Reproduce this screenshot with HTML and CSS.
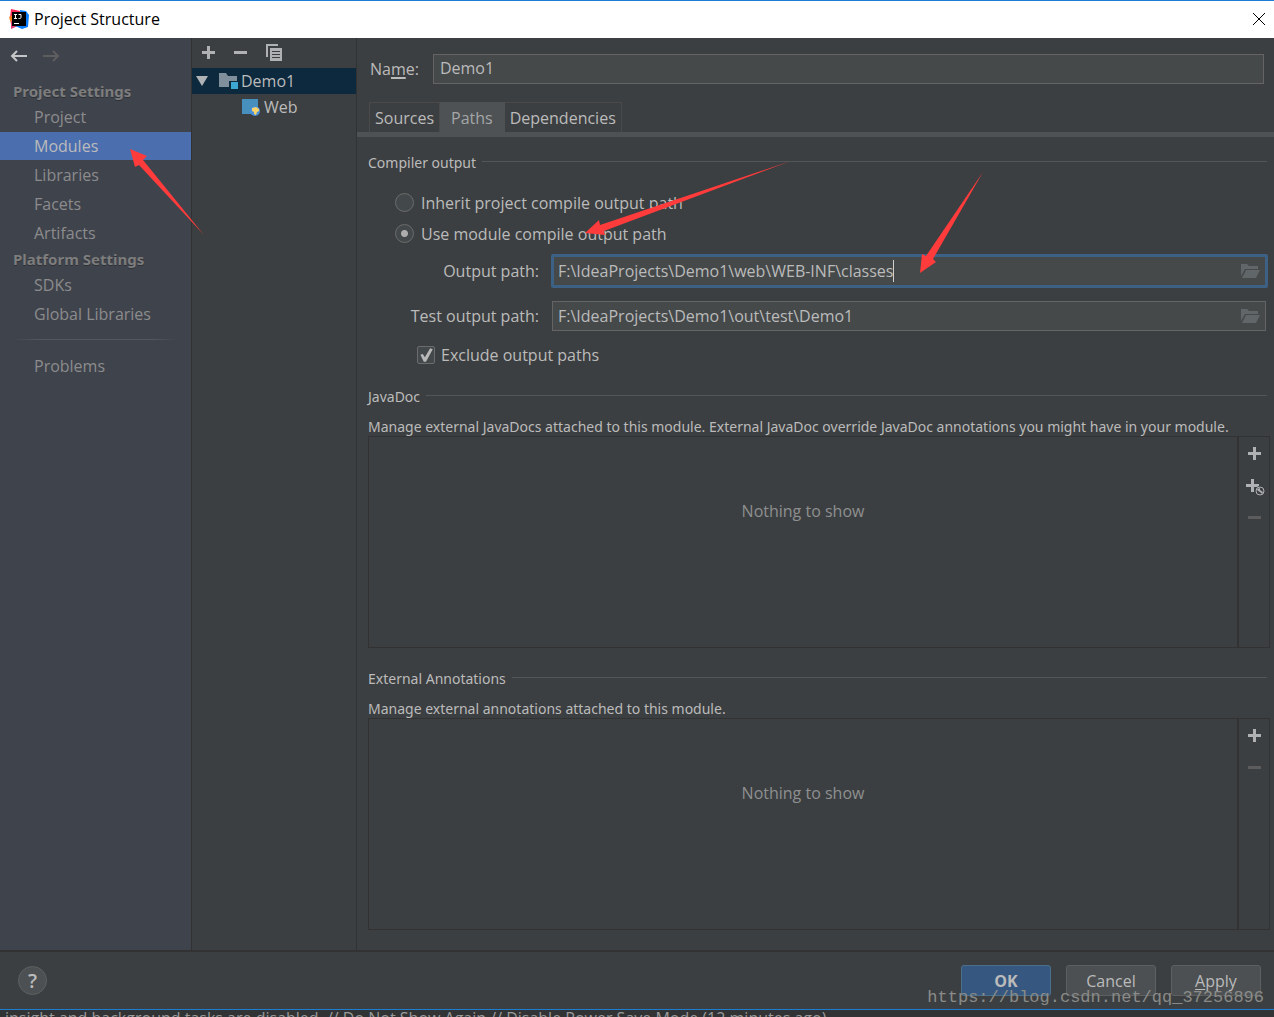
FILE: index.html
```html
<!DOCTYPE html>
<html lang="en">
<head>
  <meta charset="UTF-8">
  <meta name="viewport" content="width=device-width, initial-scale=1.0">
  <title>Project Structure</title>
  <link rel="stylesheet" href="styles.css">
</head>
<body>
  <svg class="defs" aria-hidden="true">
    <symbol id="plus" viewBox="0 0 13 13"><path d="M5 0h3v5h5v3H8v5H5V8H0V5h5z"/></symbol>
    <symbol id="minus" viewBox="0 0 13 13"><path d="M0 5h13v3H0z"/></symbol>
    <symbol id="folder-open" viewBox="0 0 19 14"><path d="M0 0h6l2 2h9v3H4L0 12z"/><path d="M5 6h14l-4 8H1z"/></symbol>
  </svg>

  <header class="titlebar">
    <svg class="logo" viewBox="0 0 20 20" width="20" height="20">
      <path fill="#fe2857" d="M2 0l9 2-3 10-7-3z"/>
      <path fill="#fc801d" d="M0 8l6-3v9l-4 1z"/>
      <path fill="#e33b73" d="M2 12l9 4-9 4z"/>
      <path fill="#087cfa" d="M11 1l6 1 3 4-1 12-6 2-7-3 6-4z"/>
      <path fill="#000" d="M3 3h14v14H3z"/>
      <path fill="none" stroke="#fff" d="M5 5.500h3M6.500 5v5M5 9.500h3M9.500 5.500H12v3q0 1-1.300 1H9.500"/>
      <path fill="#fff" d="M5 14h5v1H5z"/>
    </svg>
    <h1>Project Structure</h1>
    <button class="close" aria-label="Close">
      <svg viewBox="0 0 12 12" width="12" height="12"><path d="M0 0l12 12M12 0L0 12" stroke="#000" fill="none"/></svg>
    </button>
  </header>

  <div class="dialog">
    <aside class="sidebar">
      <div class="history">
        <button aria-label="Back"><svg viewBox="0 0 17 12" width="17" height="12"><path d="M17 6H2M7 1L2 6l5 5"/></svg></button>
        <button aria-label="Forward" disabled><svg viewBox="0 0 17 12" width="17" height="12"><path d="M0 6h15M10 1l5 5-5 5"/></svg></button>
      </div>
      <nav>
        <h2>Project Settings</h2>
        <ul>
          <li><a href="#">Project</a></li>
          <li><a href="#" class="active">Modules</a></li>
          <li><a href="#">Libraries</a></li>
          <li><a href="#">Facets</a></li>
          <li><a href="#">Artifacts</a></li>
        </ul>
        <h2>Platform Settings</h2>
        <ul>
          <li><a href="#">SDKs</a></li>
          <li><a href="#">Global Libraries</a></li>
        </ul>
        <hr>
        <ul>
          <li><a href="#">Problems</a></li>
        </ul>
      </nav>
    </aside>

    <section class="modules">
      <div class="toolbar">
        <button aria-label="Add"><svg width="13" height="13"><use href="#plus"/></svg></button>
        <button aria-label="Remove"><svg width="13" height="13"><use href="#minus"/></svg></button>
        <button aria-label="Copy">
          <svg viewBox="0 0 16 17" width="16" height="17"><path d="M0 0h12v2H2v11H0z"/><path fill-rule="evenodd" d="M4 4h12v13H4zM6 7h8v1H6zM6 10h8v1H6zM6 13h8v1H6z"/></svg>
        </button>
      </div>
      <ul class="tree">
        <li class="selected">
          <svg class="twisty" viewBox="0 0 12 10" width="12" height="10"><path fill="#b0b3b5" d="M0 0h12L6 10z"/></svg>
          <svg viewBox="0 0 20 18" width="20" height="18"><path fill="#7f8f9b" d="M0 1h7l2 3h9v11H0z"/><path fill="#0d293e" d="M10 9h10v9H10z"/><path fill="#3ca7d3" d="M12 10h7v7h-7z"/></svg>
          <span>Demo1</span>
        </li>
        <li class="child">
          <svg viewBox="0 0 18 18" width="18" height="18"><path fill="#4790bd" d="M0 1h16v15H0z"/><circle cx="13" cy="13" r="5" fill="#4a8fd8"/><path fill="#f6d36b" d="M10 10l4-1 3 2v2l-2 1-1 3-2-1v-2l-2-1z"/></svg>
          <span>Web</span>
        </li>
      </ul>
    </section>

    <main class="editor">
      <div class="name-row">
        <label for="name">Na<u>m</u>e:</label>
        <input id="name" type="text" value="Demo1">
      </div>
      <div class="tabs" role="tablist">
        <button role="tab">Sources</button>
        <button role="tab" class="active" aria-selected="true">Paths</button>
        <button role="tab">Dependencies</button>
      </div>

      <div class="paths">
        <h3>Compiler output</h3>
        <div class="options">
          <label><input type="radio" name="output">Inherit project compile output path</label>
          <label><input type="radio" name="output" checked>Use module compile output path</label>
        </div>
        <div class="fields">
          <label for="outputPath">Output path:</label>
          <div class="field focused">
            <input id="outputPath" type="text" value="F:\IdeaProjects\Demo1\web\WEB-INF\classes">
            <span class="caret"></span>
            <button aria-label="Browse output path"><svg width="19" height="14"><use href="#folder-open"/></svg></button>
          </div>
          <label for="testPath">Test output path:</label>
          <div class="field">
            <input id="testPath" type="text" value="F:\IdeaProjects\Demo1\out\test\Demo1">
            <button aria-label="Browse test output path"><svg width="19" height="14"><use href="#folder-open"/></svg></button>
          </div>
        </div>
        <label class="exclude"><input type="checkbox" checked>Exclude output paths</label>

        <h3>JavaDoc</h3>
        <p class="hint">Manage external JavaDocs attached to this module. External JavaDoc override JavaDoc annotations you might have in your module.</p>
        <div class="list">
          <div class="empty">Nothing to show</div>
          <div class="list-tools">
            <button aria-label="Add JavaDoc"><svg width="13" height="13"><use href="#plus"/></svg></button>
            <button aria-label="Add JavaDoc URL">
              <svg class="wide" viewBox="0 0 19 17" width="19" height="17"><path d="M5 0h3v5h5v3H8v5H5V8H0V5h5z"/><circle cx="14" cy="12" r="5" fill="#3c3f41"/><circle cx="14" cy="12" r="4" fill="none" stroke="#afb1b3"/><path d="M11 10l3-1v2l3 2-1 2-2-2-2-1z"/></svg>
            </button>
            <button aria-label="Remove JavaDoc" disabled><svg width="13" height="13"><use href="#minus"/></svg></button>
          </div>
        </div>

        <h3>External Annotations</h3>
        <p class="hint">Manage external annotations attached to this module.</p>
        <div class="list">
          <div class="empty">Nothing to show</div>
          <div class="list-tools">
            <button aria-label="Add annotations"><svg width="13" height="13"><use href="#plus"/></svg></button>
            <button aria-label="Remove annotations" disabled><svg width="13" height="13"><use href="#minus"/></svg></button>
          </div>
        </div>
      </div>
    </main>
  </div>

  <footer class="actions">
    <button class="help" aria-label="Help">?</button>
    <button class="btn primary">OK</button>
    <button class="btn">Cancel</button>
    <button class="btn"><u>A</u>pply</button>
    <span class="watermark">https://blog.csdn.net/qq_37256896</span>
  </footer>
  <div class="statusbar">insight and background tasks are disabled. // Do Not Show Again // Disable Power Save Mode (12 minutes ago)</div>

  <svg class="arrows" viewBox="0 0 1274 1017" width="1274" height="1017" aria-hidden="true">
    <path d="M130 149l17 7-4 4 61 75-65-70-4 2z"/>
    <path d="M585 233l14-13 1 5 191-64-187 70 1 4z"/>
    <path d="M920 273l2-19 4 2 57-84-50 87 3 3z"/>
  </svg>
</body>
</html>
```

FILE: styles.css
```css
:root {
  --bg: #3c3f41;
  --sidebar: #3f434c;
  --field: #45494a;
  --line: #323232;
  --text: #bbbbbb;
  --muted: #8c8c8c;
  --icon: #afb1b3;
  --blue: #4b6eaf;
}
* { box-sizing: border-box; margin: 0; padding: 0; }
body { position: relative; display: flex; flex-direction: column; height: 100vh; overflow: hidden; background: var(--bg); color: var(--text); font-family: "Open Sans", "Noto Sans", sans-serif; font-size: 16px; line-height: 20px; }
button, input { font: inherit; color: inherit; background: none; border: none; outline: none; }
button { display: flex; align-items: center; justify-content: center; cursor: pointer; }
ul { list-style: none; }
u { text-underline-offset: 2px; text-decoration-thickness: 2px; }
svg { flex: none; fill: var(--icon); }
.defs { position: absolute; width: 0; height: 0; }

.titlebar { display: flex; align-items: center; gap: 5px; height: 38px; padding: 0 9px 2px; background: #fff; border-top: 1px solid #1a7fd4; color: #000; }
.titlebar h1 { flex: 1; font-size: 16px; font-weight: 400; }

.dialog { display: flex; flex: 1; min-height: 0; border-bottom: 2px solid var(--line); }

.sidebar { width: 191px; background: var(--sidebar); color: var(--muted); }
.history { display: flex; gap: 16px; height: 41px; padding: 12px 10px; }
.history svg { fill: none; stroke: #c4c6c8; stroke-width: 2; }
.history button { height: 12px; }
.history :disabled svg { stroke: #5e5e5e; }
.sidebar h2 { height: 24px; padding-left: 13px; font-family: "Noto Sans", sans-serif; font-size: 15px; line-height: 24px; color: #7d7d7d; text-shadow: 0 1px #2d3036; }
.sidebar li + li { margin-top: 1px; }
.sidebar a { display: block; height: 28px; padding-left: 34px; line-height: 28px; color: inherit; text-decoration: none; }
.sidebar a.active { background: var(--blue); color: var(--text); }
.sidebar hr { height: 1px; margin: 11px 12px 12px; border: none; background: linear-gradient(to right, transparent, #53565e 15%, #53565e 85%, transparent); }

.modules { width: 166px; border: solid var(--line); border-width: 0 1px; }
.toolbar { display: flex; align-items: center; gap: 19px; height: 30px; padding: 0 10px 2px; }
.tree li { display: flex; align-items: center; gap: 2px; height: 26px; padding-left: 4px; }
.tree .twisty { margin-right: 9px; }
.tree .selected { background: #0d293e; }
.tree .child { gap: 4px; padding-left: 50px; }

.editor { display: flex; flex: 1; flex-direction: column; min-width: 0; }
.name-row { display: flex; align-items: center; gap: 14px; padding: 16px 10px 18px 13px; }
.name-row input { flex: 1; height: 30px; padding: 0 6px 2px; background: var(--field); border: 1px solid #646464; }
.tabs { display: flex; padding-left: 12px; border-bottom: 5px solid #4e5254; }
.tabs button { height: 30px; padding: 0 5px; border: 1px solid #4a4a4a; border-bottom: none; }
.tabs button + button { border-left: none; }
.tabs .active { padding: 0 11px; background: #4e5254; border-color: #4e5254; color: #a4a6a8; }

.paths { display: flex; flex: 1; flex-direction: column; min-height: 0; padding: 16px 4px 20px 11px; }
h3, .hint { font-family: "Noto Sans", sans-serif; font-size: 14px; font-weight: 400; }
h3 { display: flex; gap: 6px; height: 20px; padding-right: 3px; }
h3::after { content: ""; flex: 1; height: 8px; border-bottom: 1px solid #515658; }
.options { padding: 14px 27px 5px; }
.options label { display: flex; align-items: center; gap: 7px; height: 31px; }
input[type="radio"] { appearance: none; width: 19px; height: 19px; border: 1px solid #6b6b6b; border-radius: 50%; background: #43494a; }
input[type="radio"]:checked { background: radial-gradient(circle, #adadad 3px, #43494a 4px); }

.fields { display: grid; grid-template-columns: 171px 1fr; gap: 13px 12px; align-items: center; }
.fields > label { text-align: right; }
.field { display: flex; align-items: center; height: 30px; margin: 0 4px 0 1px; padding: 0 5px; background: var(--field); border: 1px solid #646464; }
.field input { field-sizing: content; }
.field button { margin-left: auto; }
.field svg { fill: #616669; }
.field.focused { height: 34px; margin: 0 2px 0 0; padding: 0 5px 0 4px; border: 3px solid #3d6185; border-radius: 2px; }
.caret { width: 1px; height: 22px; background: #d0d0d0; }
.exclude { display: flex; align-items: center; gap: 6px; height: 22px; margin: 13px 0 21px 49px; }
input[type="checkbox"] { appearance: none; width: 18px; height: 18px; border: 1px solid #6b6b6b; border-radius: 2px; background: #43494a; }
input[type="checkbox"]:checked::before { content: ""; display: block; width: 16px; height: 16px; background: #b8b8b8; clip-path: polygon(15% 48%, 30% 44%, 43% 64%, 76% 8%, 92% 14%, 50% 92%, 36% 92%); }

.hint { margin-top: 10px; line-height: 19px; white-space: nowrap; }
.list { display: flex; flex: 1; min-height: 0; border: 1px solid var(--line); }
.list + h3 { margin-top: 21px; }
.empty { flex: 1; padding-top: 64px; text-align: center; color: #8e8f90; }
.list-tools { display: flex; flex-direction: column; gap: 19px; width: 32px; padding-top: 10px; border-left: 2px solid var(--line); }
.list-tools button { height: 13px; }
.list-tools .wide { margin: 4px 0 0 2px; }
.list-tools :disabled svg { fill: #5c5c5c; }

.actions { position: relative; display: flex; align-items: center; gap: 15px; height: 57px; padding: 0 13px 0 18px; }
.help { width: 29px; height: 29px; margin-right: auto; border: 1px solid #5e6060; border-radius: 50%; background: #4c5052; font-size: 20px; font-weight: 600; }
.btn { width: 90px; height: 31px; border: 1px solid #5e6060; border-radius: 3px; background: #4c5052; }
.btn u { text-decoration-thickness: 1px; }
.primary { background: #365880; border-color: #4c708c; font-weight: 700; }
.watermark { position: absolute; right: 10px; bottom: 1px; color: #8a8b88; font-family: "Liberation Mono", monospace; font-size: 17px; }
.statusbar { height: 8px; padding-left: 5px; overflow: hidden; border-top: 1px solid #1a7fd4; background: #313335; color: #9a9a9a; line-height: 16px; white-space: nowrap; }

.arrows { position: absolute; top: 0; left: 0; pointer-events: none; fill: #ff3b3b; }
```
